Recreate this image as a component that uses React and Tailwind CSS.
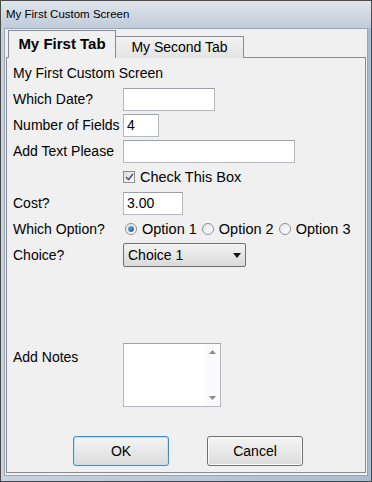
import React from "react";

const font = { fontFamily: '"Liberation Sans", Arial, sans-serif' };

function Row({ label, children, className = "" }) {
  return (
    <div className={"flex items-center h-[26px] " + className}>
      <div className="w-[110px] shrink-0 text-[14px] text-black leading-[18px]">{label}</div>
      {children}
    </div>
  );
}

function Input({ w, value = "" }) {
  return (
    <div
      className={"h-[23px] bg-white border border-[#b5b8bf] border-t-[#9ea2a8] flex items-center px-[3px] text-[14px] text-black " + w}
    >
      {value}
    </div>
  );
}

function Radio({ checked, label }) {
  return (
    <div className="flex items-center gap-[5px]">
      <div className="w-[12px] h-[12px] rounded-full border border-[#8e8f8f] bg-gradient-to-br from-[#e6e6e6] to-[#ffffff] flex items-center justify-center">
        {checked && <div className="w-[6px] h-[6px] rounded-full bg-gradient-to-br from-[#6fb0e6] to-[#1e5a9c]" />}
      </div>
      <span className="text-[14.5px] leading-[18px]">{label}</span>
    </div>
  );
}

export default function App() {
  return (
    <div className="w-[372px] h-[482px] bg-[#4a4a4a] p-[1px]" style={font}>
      <div className="w-full h-full flex flex-col bg-gradient-to-r from-[#c7d2de] via-[#b9c7d6] to-[#aabcd0]">
        <div className="h-[27px] flex items-center pl-[5px] text-[11.5px] text-black bg-gradient-to-b from-[#dfe5ec] to-[#c0ccda]">
          My First Custom Screen
        </div>
        <div className="flex-1 mx-[3px] mb-[5px] bg-[#f0f0f0] border border-[#98a6b5] flex flex-col px-[1px] pt-[1px]">
          <div className="flex items-end h-[28px] pl-[2px] relative z-10">
            <div className="h-[28px] w-[108px] border border-[#898c95] border-b-0 bg-[#f0f0f0] flex items-center justify-center font-bold text-[15px] text-black">
              My First Tab
            </div>
            <div className="h-[22px] w-[128px] border border-[#898c95] border-l-0 border-b-0 bg-gradient-to-b from-[#f2f2f2] to-[#e4e4e4] flex items-center justify-center text-[14px] text-black">
              My Second Tab
            </div>
          </div>
          <div className="flex-1 -mt-[1px] border border-[#898c95] bg-[#f0f0f0] flex flex-col pl-[6px] pt-[2px] mb-[2px]">
            <div className="h-[26px] flex items-center text-[14px] leading-[18px]">My First Custom Screen</div>
            <Row label="Which Date?"><Input w="w-[92px]" /></Row>
            <Row label="Number of Fields"><Input w="w-[36px]" value="4" /></Row>
            <Row label="Add Text Please"><Input w="w-[172px]" /></Row>
            <Row label="">
              <div className="flex items-center gap-[5px]">
                <div className="w-[12px] h-[12px] border border-[#8e8f8f] bg-gradient-to-br from-[#dcdcdc] to-[#fbfbfb] flex items-center justify-center">
                  <svg width="9" height="8" viewBox="0 0 9 8">
                    <path d="M1 4 L3.5 6.5 L8 1" fill="none" stroke="#4a5a78" strokeWidth="1.6" />
                  </svg>
                </div>
                <span className="text-[14.5px] leading-[18px]">Check This Box</span>
              </div>
            </Row>
            <Row label="Cost?"><Input w="w-[60px]" value="3.00" /></Row>
            <Row label="Which Option?">
              <div className="flex items-center gap-[5px] pl-[2px]">
                <Radio checked label="Option 1" />
                <Radio label="Option 2" />
                <Radio label="Option 3" />
              </div>
            </Row>
            <Row label="Choice?">
              <div className="w-[123px] h-[24px] border border-[#707070] rounded-[2px] bg-gradient-to-b from-[#f3f3f3] to-[#dadada] flex items-center justify-between px-[4px] text-[14px]">
                <span>Choice 1</span>
                <svg width="8" height="5" viewBox="0 0 8 5"><path d="M0 0 H8 L4 5 Z" fill="#111" /></svg>
              </div>
            </Row>
            <div className="flex items-start mt-[75px]">
              <div className="w-[110px] shrink-0 text-[14px] leading-[18px] pt-[5px]">Add Notes</div>
              <div className="w-[98px] h-[64px] bg-white border border-[#b5b8bf] border-t-[#9ea2a8] flex justify-end">
                <div className="w-[16px] h-full flex flex-col items-center justify-between py-[6px] bg-[#fafafa]">
                  <svg width="7" height="4" viewBox="0 0 7 4"><path d="M0 4 H7 L3.5 0 Z" fill="#8a8a8a" /></svg>
                  <svg width="7" height="4" viewBox="0 0 7 4"><path d="M0 0 H7 L3.5 4 Z" fill="#8a8a8a" /></svg>
                </div>
              </div>
            </div>
            <div className="flex mt-[29px] pl-[60px] gap-[38px]">
              <button className="w-[96px] h-[30px] border border-[#3c8ccb] rounded-[3px] bg-gradient-to-b from-[#f4f4f4] to-[#dcdcdc] text-[14px] text-black shadow-[inset_0_0_0_1px_#bfe3f8]">
                OK
              </button>
              <button className="w-[96px] h-[30px] border border-[#707070] rounded-[3px] bg-gradient-to-b from-[#f4f4f4] to-[#dcdcdc] text-[14px] text-black shadow-[inset_0_0_0_1px_#fcfcfc]">
                Cancel
              </button>
            </div>
          </div>
        </div>
      </div>
    </div>
  );
}
